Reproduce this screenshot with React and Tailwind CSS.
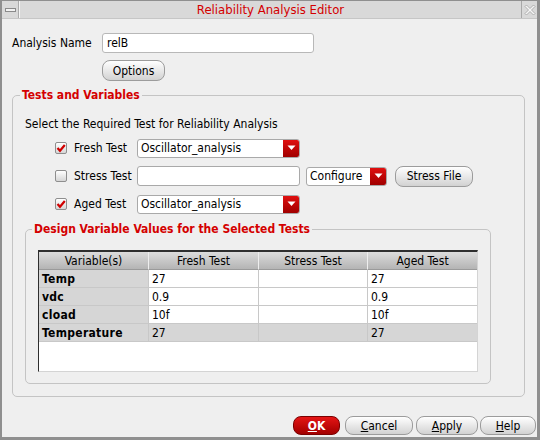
import React from "react";

function Check({ checked }) {
  return (
    <div className="w-[12px] h-[12px] border border-[#8e8e8e] rounded-[2px] bg-linear-to-b from-white to-[#d6d6d6] flex items-center justify-center">
      {checked && (
        <svg width="10" height="10" viewBox="0 0 10 10">
          <path d="M1.5 5 L4 7.8 L8.8 2" stroke="#d00000" strokeWidth="2.2" fill="none" />
        </svg>
      )}
    </div>
  );
}

function Arrow() {
  return (
    <svg width="9" height="6" viewBox="0 0 9 6">
      <path d="M0.5 0.5 H8.5 L4.5 5 Z" fill="white" />
    </svg>
  );
}

function Dropdown({ value, w }) {
  return (
    <div className={`${w} h-[19px] flex bg-white border border-[#a9a9a9] rounded-[3px] overflow-hidden`}>
      <div className="flex-1 pl-[3px] leading-[17px] whitespace-nowrap">{value}</div>
      <div className="w-[16px] bg-linear-to-b from-[#e01010] to-[#a00000] flex items-center justify-center">
        <Arrow />
      </div>
    </div>
  );
}

function Btn({ children, w, h = "h-[21px]", red }) {
  return (
    <div
      className={`${w} ${h} rounded-[8px] border flex items-center justify-center leading-none ${
        red
          ? "border-[#7a0000] bg-linear-to-b from-[#e51515] to-[#a30000] text-white font-bold"
          : "border-[#9c9c9c] bg-linear-to-b from-white to-[#d2d2d2]"
      }`}
    >
      {children}
    </div>
  );
}

const rows = [
  { name: "Temp", f: "27", s: "", a: "27", gray: false },
  { name: "vdc", f: "0.9", s: "", a: "0.9", gray: false },
  { name: "cload", f: "10f", s: "", a: "10f", gray: false },
  { name: "Temperature", f: "27", s: "", a: "27", gray: true },
];

export default function App() {
  return (
    <div className="w-[540px] h-[440px] bg-[#efefef] border-l-2 border-r-[3px] border-b-[3px] border-t border-[#8f8f8f] flex flex-col font-['DejaVu_Sans_Condensed','DejaVu_Sans',sans-serif] text-[12px] text-black overflow-hidden">
      {/* title bar */}
      <div className="h-[18px] flex bg-[#d9d9d9] border-b border-[#c6c6c6]">
        <div className="w-[17px] border-r border-[#ababab] flex items-center justify-center">
          <div className="w-[11px] h-[4px] border border-[#8a8a8a] bg-[#f2f2f2]" />
        </div>
        <div className="flex-1 text-center text-[#d40000] text-[13px] leading-[17px] border-l border-[#f4f4f4]">
          Reliability Analysis Editor
        </div>
        <div className="w-[16px] border-l border-[#a8a8a8] flex items-center justify-center">
          <svg width="12" height="12" viewBox="0 0 12 12">
            <path
              d="M1 2.5 L2.5 1 L6 4.5 L9.5 1 L11 2.5 L7.5 6 L11 9.5 L9.5 11 L6 7.5 L2.5 11 L1 9.5 L4.5 6 Z"
              fill="#f6f6f6"
              stroke="#a0a0a0"
              strokeWidth="0.8"
            />
          </svg>
        </div>
      </div>

      {/* Analysis name */}
      <div className="flex items-center mt-[14px] pl-[10px] h-[20px]">
        <span className="w-[90px]">Analysis Name</span>
        <div className="w-[212px] h-[20px] bg-white border border-[#b8b8b8] rounded-[3px] pl-[4px] leading-[18px]">
          relB
        </div>
      </div>
      <div className="ml-[100px] mt-[7px]">
        <Btn w="w-[63px]">Options</Btn>
      </div>

      {/* Tests and variables */}
      <fieldset className="ml-[10px] mt-[7px] w-[513px] h-[309px] border border-[#c4c4c4] rounded-[5px] p-0">
        <legend className="ml-[7px] px-[2px] text-[#d40000] font-bold leading-[14px]">Tests and Variables</legend>
        <div className="ml-[12px] mt-[15px] leading-[14px]">Select the Required Test for Reliability Analysis</div>
        <div className="flex flex-col gap-[8px] mt-[7px]">
          <div className="flex items-center h-[20px]">
            <div className="ml-[42px]"><Check checked /></div>
            <span className="ml-[7px] w-[63px]">Fresh Test</span>
            <Dropdown value="Oscillator_analysis" w="w-[163px]" />
          </div>
          <div className="flex items-center h-[20px]">
            <div className="ml-[42px]"><Check /></div>
            <span className="ml-[7px] w-[63px]">Stress Test</span>
            <div className="w-[163px] h-[20px] bg-white border border-[#a9a9a9] rounded-[3px]" />
            <div className="ml-[6px]">
              <Dropdown value="Configure" w="w-[81px]" />
            </div>
            <div className="ml-[8px]">
              <Btn w="w-[78px]">Stress File</Btn>
            </div>
          </div>
          <div className="flex items-center h-[20px]">
            <div className="ml-[42px]"><Check checked /></div>
            <span className="ml-[7px] w-[63px]">Aged Test</span>
            <Dropdown value="Oscillator_analysis" w="w-[163px]" />
          </div>
        </div>

        {/* inner group */}
        <fieldset className="ml-[12px] mt-[8px] w-[466px] h-[162px] border border-[#c4c4c4] rounded-[5px] p-0">
          <legend className="ml-[6px] px-[2px] text-[#d40000] font-bold leading-[14px]">
            Design Variable Values for the Selected Tests
          </legend>
          <div className="ml-[12px] mt-[14px] w-[440px] h-[122px] bg-white border-t-2 border-l border-[#2e2e2e] border-r border-b border-r-[#d4d4d4] border-b-[#d4d4d4]">
            <div className="grid grid-cols-[110px_110px_109px_109px]">
              {["Variable(s)", "Fresh Test", "Stress Test", "Aged Test"].map((h, i) => (
                <div
                  key={h}
                  className={`h-[18px] flex items-center justify-center bg-linear-to-b from-[#dcdcdc] to-[#b4b4b4] border-b border-[#9a9a9a] ${
                    i < 3 ? "border-r border-r-[#eeeeee]" : ""
                  }`}
                >
                  {h}
                </div>
              ))}
              {rows.map((r) => (
                <React.Fragment key={r.name}>
                  <div className="h-[18px] pl-[3px] flex items-center bg-[#d6d6d6] font-bold border-b border-r border-[#c8c8c8] tracking-[0.3px]">
                    {r.name}
                  </div>
                  <div className={`h-[18px] pl-[3px] flex items-center border-b border-r border-[#c8c8c8] ${r.gray ? "bg-[#d6d6d6]" : "bg-white"}`}>
                    {r.f}
                  </div>
                  <div className={`h-[18px] pl-[3px] flex items-center border-b border-r border-[#c8c8c8] ${r.gray ? "bg-[#d6d6d6]" : "bg-white"}`}>
                    {r.s}
                  </div>
                  <div className={`h-[18px] pl-[3px] flex items-center border-b border-[#c8c8c8] ${r.gray ? "bg-[#d6d6d6]" : "bg-white"}`}>
                    {r.a}
                  </div>
                </React.Fragment>
              ))}
            </div>
          </div>
        </fieldset>
      </fieldset>

      {/* buttons */}
      <div className="flex justify-end mt-[19px] pr-[1px]">
        <Btn w="w-[47px]" h="h-[19px]" red><span className="underline">O</span>K</Btn>
        <div className="ml-[5px]"><Btn w="w-[68px]" h="h-[19px]"><span className="underline">C</span>ancel</Btn></div>
        <div className="ml-[3px]"><Btn w="w-[62px]" h="h-[19px]"><span className="underline">A</span>pply</Btn></div>
        <div className="ml-[2px]"><Btn w="w-[56px]" h="h-[19px]"><span className="underline">H</span>elp</Btn></div>
      </div>
    </div>
  );
}
